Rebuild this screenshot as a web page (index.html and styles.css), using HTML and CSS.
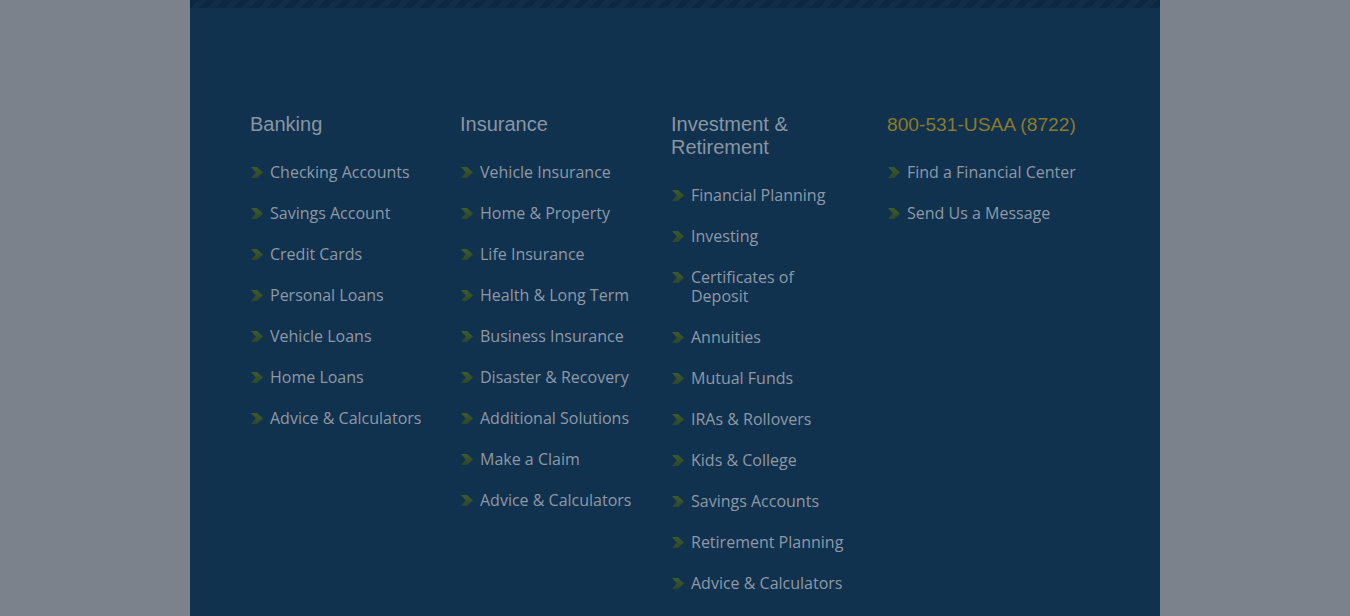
FILE: index.html
```html
<!DOCTYPE html>
<html>
<head>
<meta charset="utf-8">
<link rel="stylesheet" href="styles.css">
</head>
<body>
<div class="panel">
  <div class="stripe"></div>
  <div class="cols">
    <div class="col">
      <h3 class="head">Banking</h3>
      <ul class="links">
        <li><span class="chev"></span><a>Checking Accounts</a></li>
        <li><span class="chev"></span><a>Savings Account</a></li>
        <li><span class="chev"></span><a>Credit Cards</a></li>
        <li><span class="chev"></span><a>Personal Loans</a></li>
        <li><span class="chev"></span><a>Vehicle Loans</a></li>
        <li><span class="chev"></span><a>Home Loans</a></li>
        <li><span class="chev"></span><a>Advice &amp; Calculators</a></li>
      </ul>
    </div>
    <div class="col">
      <h3 class="head">Insurance</h3>
      <ul class="links">
        <li><span class="chev"></span><a>Vehicle Insurance</a></li>
        <li><span class="chev"></span><a>Home &amp; Property</a></li>
        <li><span class="chev"></span><a>Life Insurance</a></li>
        <li><span class="chev"></span><a>Health &amp; Long Term</a></li>
        <li><span class="chev"></span><a>Business Insurance</a></li>
        <li><span class="chev"></span><a>Disaster &amp; Recovery</a></li>
        <li><span class="chev"></span><a>Additional Solutions</a></li>
        <li><span class="chev"></span><a>Make a Claim</a></li>
        <li><span class="chev"></span><a>Advice &amp; Calculators</a></li>
      </ul>
    </div>
    <div class="col col-inv">
      <h3 class="head">Investment &amp;<br>Retirement</h3>
      <ul class="links">
        <li><span class="chev"></span><a>Financial Planning</a></li>
        <li><span class="chev"></span><a>Investing</a></li>
        <li><span class="chev"></span><a>Certificates of<br>Deposit</a></li>
        <li><span class="chev"></span><a>Annuities</a></li>
        <li><span class="chev"></span><a>Mutual Funds</a></li>
        <li><span class="chev"></span><a>IRAs &amp; Rollovers</a></li>
        <li><span class="chev"></span><a>Kids &amp; College</a></li>
        <li><span class="chev"></span><a>Savings Accounts</a></li>
        <li><span class="chev"></span><a>Retirement Planning</a></li>
        <li><span class="chev"></span><a>Advice &amp; Calculators</a></li>
      </ul>
    </div>
    <div class="col">
      <h3 class="head phone">800-531-USAA (8722)</h3>
      <ul class="links">
        <li><span class="chev"></span><a>Find a Financial Center</a></li>
        <li><span class="chev"></span><a>Send Us a Message</a></li>
      </ul>
    </div>
  </div>
</div>
</body>
</html>
```
FILE: styles.css
```css
html, body {
  margin: 0;
  padding: 0;
  background: #7b828b;
}
.panel {
  width: 970px;
  margin: 0 auto;
  min-height: 616px;
  background: #11324e;
}
.stripe {
  height: 8px;
  background: repeating-linear-gradient(135deg, #0d2740 0, #0d2740 6px, #112d48 6px, #112d48 12px);
}
.cols {
  display: grid;
  grid-template-columns: 210px 211px 216px 1fr;
  padding: 105px 0 0 60px;
}
.head {
  margin: 0 0 27px;
  font-family: "Liberation Sans", Arial, sans-serif;
  font-weight: normal;
  font-size: 20px;
  line-height: 23px;
  color: #8a95a2;
}
.phone {
  color: #8b7a28;
  font-size: 19.2px;
}
.links {
  list-style: none;
  margin: 0;
  padding: 0;
}
.links li {
  display: flex;
  align-items: flex-start;
  margin-bottom: 22px;
  font-family: "Open Sans", sans-serif;
  font-size: 16px;
  line-height: 19px;
  color: #8e99a6;
}
.chev {
  flex: none;
  width: 12px;
  height: 11px;
  margin: 4px 8px 0 1px;
  background: linear-gradient(#3d5c2c, #2c4727);
  clip-path: polygon(0 0, 50% 0, 100% 50%, 50% 100%, 0 100%, 40% 50%);
}
.chev + a {
  margin-left: -1px;
}
```
